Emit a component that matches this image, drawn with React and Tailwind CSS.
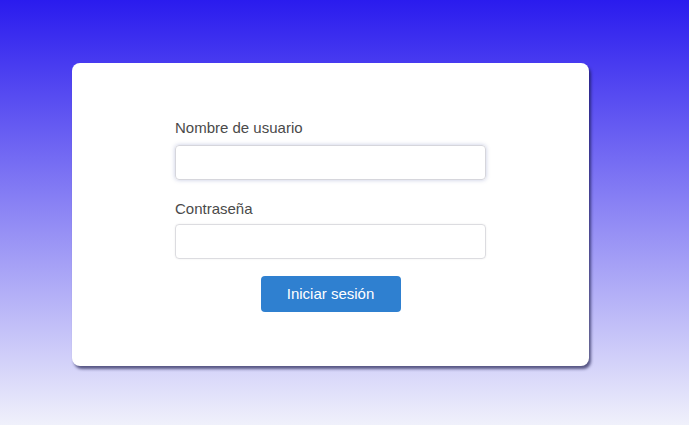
import { useState } from "react";

export default function App() {
  const [user, setUser] = useState("");
  const [pass, setPass] = useState("");

  return (
    <div
      className="min-h-[425px] w-full bg-[linear-gradient(to_bottom,#2a1bee,#f0f1fb)] flex pl-[72px] pt-[63px]"
      style={{ fontFamily: '"Liberation Sans", Arial, sans-serif' }}
    >
      <div className="w-[517px] h-[303px] bg-white rounded-[8px] shadow-[2px_3px_3px_rgba(20,20,70,0.65)] flex flex-col items-center pt-[55px]">
        <form className="w-[311px] flex flex-col" onSubmit={(e) => e.preventDefault()}>
          <label className="text-[15px] leading-[20px] text-[#4a4a4a] mb-[7px]">Nombre de usuario</label>
          <input
            type="text"
            value={user}
            onChange={(e) => setUser(e.target.value)}
            className="h-[35px] w-full rounded-[4px] border border-[#d6d6dc] shadow-[0_0_4px_rgba(90,100,170,0.35)] px-2 outline-none"
          />
          <label className="text-[15px] leading-[20px] text-[#4a4a4a] mt-[19px] mb-[5px]">Contraseña</label>
          <input
            type="password"
            value={pass}
            onChange={(e) => setPass(e.target.value)}
            className="h-[35px] w-full rounded-[4px] border border-[#dcdce0] shadow-[0_0_2px_rgba(0,0,0,0.08)] px-2 outline-none"
          />
          <button
            type="submit"
            className="mt-[17px] self-center w-[140px] h-[36px] rounded-[4px] bg-[#2f80d0] text-white text-[15px]"
          >
            Iniciar sesión
          </button>
        </form>
      </div>
    </div>
  );
}
